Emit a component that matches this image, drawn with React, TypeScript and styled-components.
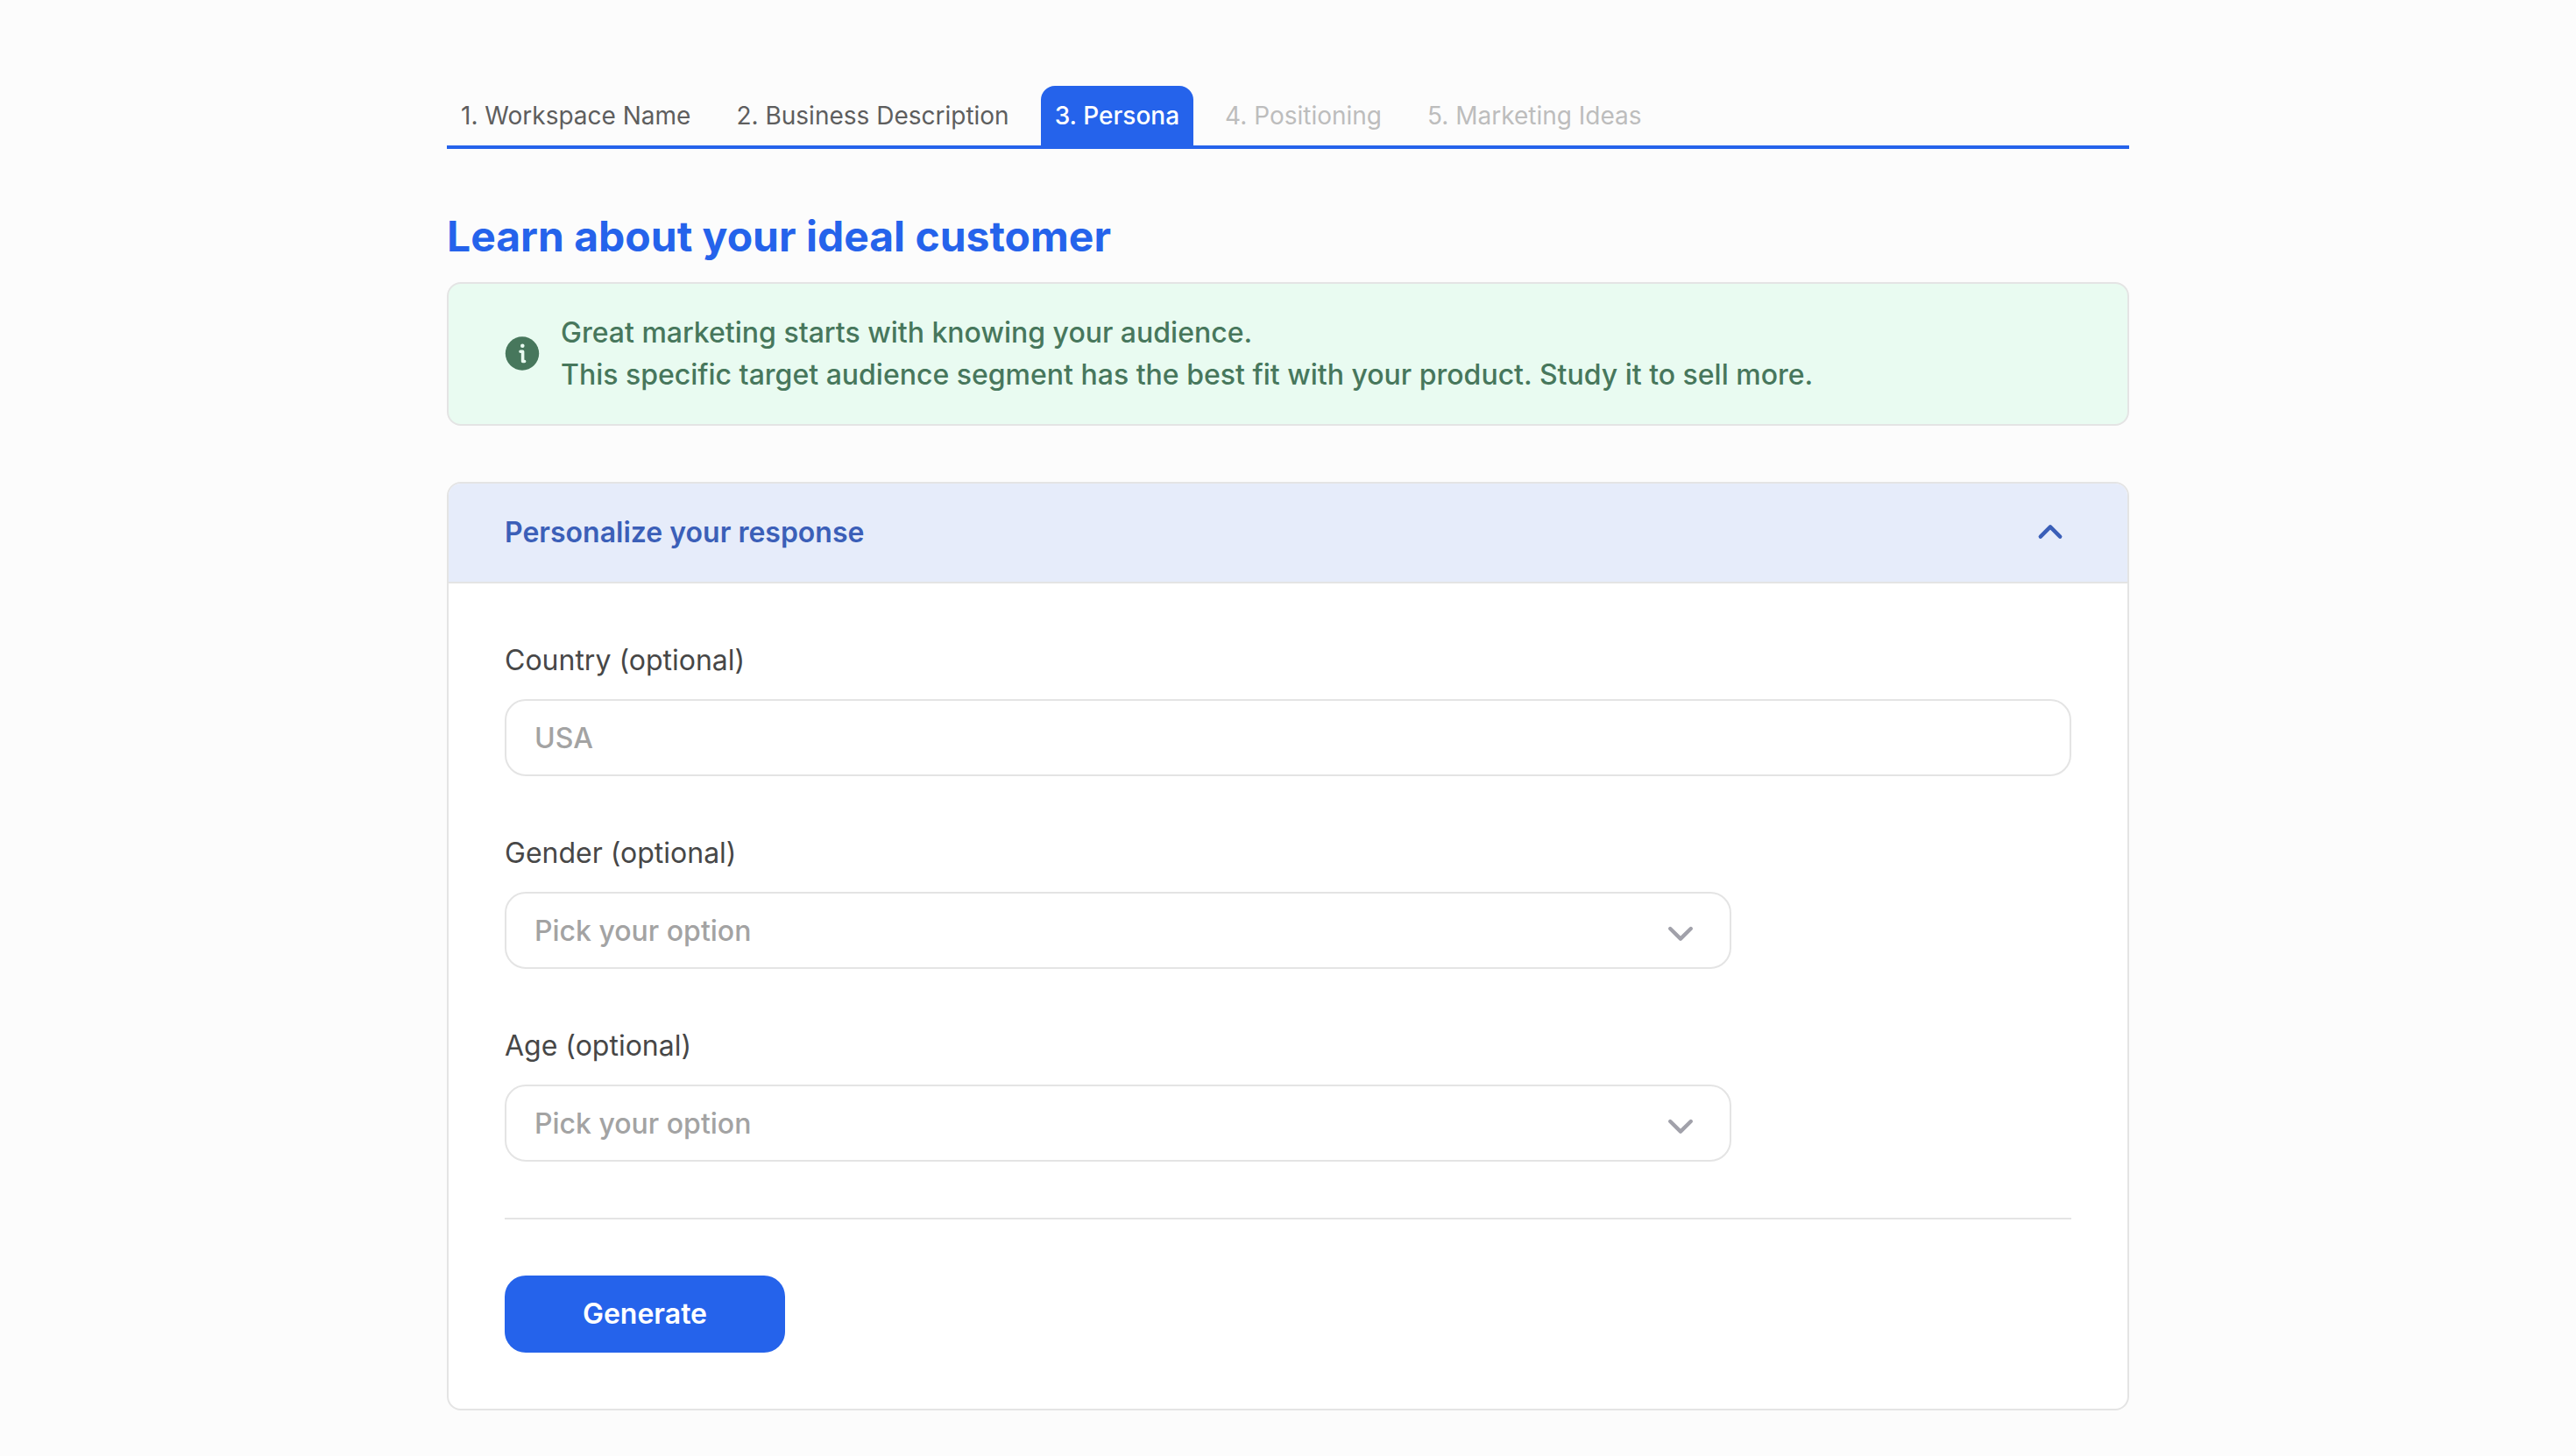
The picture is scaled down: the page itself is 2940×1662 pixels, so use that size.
import React, { useState } from "react";
import styled, { createGlobalStyle, css } from "styled-components";

const GlobalStyle = createGlobalStyle`
  *, *::before, *::after { box-sizing: border-box; }
  body {
    margin: 0;
    background: #fcfcfc;
    font-family: Inter, "Liberation Sans", sans-serif;
    font-size: 32px;
    line-height: 48px;
    -webkit-font-smoothing: antialiased;
  }
  button, input, select { font: inherit; }
`;

const Page = styled.main`
  width: 100%;
  max-width: 1984px;
  margin: 0 auto;
  padding: 98px 32px 52px;
`;

const Tabs = styled.nav`
  display: flex;
  gap: 20px;
  border-bottom: 4px solid #2563eb;
`;

const Tab = styled.button<{ $active?: boolean }>`
  padding: 14px 16px;
  border: 0;
  border-radius: 16px 16px 0 0;
  background: transparent;
  color: #5e5e5e;
  font-size: 28px;
  line-height: 40px;
  cursor: pointer;

  &:disabled {
    color: #bdbdbd;
    cursor: default;
  }

  ${({ $active }) =>
    $active &&
    css`
      background: #2563eb;
      color: #ffffff;
      font-weight: 500;
    `}
`;

const Title = styled.h1`
  margin: 64px 0 16px;
  color: #2563eb;
  font-size: 48px;
  font-weight: 700;
  line-height: 72px;
`;

const Notice = styled.section`
  display: flex;
  align-items: center;
  gap: 24px;
  padding: 32px 64px;
  border: 2px solid #e4e4e4;
  border-radius: 16px;
  background: #e9fbf1;
  color: #47775c;
  font-weight: 500;
`;

const NoticeText = styled.p`
  margin: 0;
`;

const InfoGlyph = styled.svg`
  flex: none;
  width: 40px;
  height: 40px;
`;

const Card = styled.section`
  margin-top: 64px;
  border: 2px solid #e4e4e4;
  border-radius: 16px;
  background: #ffffff;
  overflow: hidden;
`;

const CardHeader = styled.button`
  display: flex;
  align-items: center;
  justify-content: space-between;
  width: 100%;
  padding: 32px 72px 32px 64px;
  border: 0;
  border-bottom: 2px solid #e4e4e4;
  background: #e6ecfa;
  color: #3b5fb8;
  font-weight: 600;
  text-align: left;
  cursor: pointer;
`;

const Chevron = styled.svg`
  width: 32px;
  height: 32px;
  fill: none;
  stroke: currentColor;
  stroke-linecap: round;
  stroke-linejoin: round;
`;

const Form = styled.form`
  display: flex;
  flex-direction: column;
  gap: 64px;
  padding: 64px;
`;

const Field = styled.div<{ $narrow?: boolean }>`
  display: flex;
  flex-direction: column;
  gap: 20px;
  width: 100%;
  max-width: ${({ $narrow }) => ($narrow ? "1400px" : "none")};
`;

const Label = styled.label`
  color: #474747;
`;

const control = css`
  width: 100%;
  height: 88px;
  padding: 0 32px;
  border: 2px solid #e4e4e4;
  border-radius: 24px;
  background: #ffffff;
  color: #a3a3a3;
  font-weight: 500;
`;

const TextInput = styled.input`
  ${control}
  &::placeholder {
    color: #a3a3a3;
    opacity: 1;
  }
`;

const SelectWrap = styled.div`
  display: grid;
  align-items: center;
  color: #a1a1aa;

  > * {
    grid-area: 1 / 1;
  }
  > svg {
    justify-self: end;
    margin-right: 42px;
    pointer-events: none;
  }
`;

const Select = styled.select`
  ${control}
  padding-top: 2px;
  appearance: none;
`;

const Divider = styled.hr`
  width: 100%;
  height: 2px;
  margin: 0;
  border: 0;
  background: #e4e4e4;
`;

const Submit = styled.button`
  align-self: flex-start;
  width: 320px;
  height: 88px;
  border: 0;
  border-radius: 24px;
  background: #2563eb;
  color: #ffffff;
  font-weight: 600;
  cursor: pointer;
`;

const InfoIcon = () => (
  <InfoGlyph viewBox="0 0 40 40" aria-hidden="true">
    <circle cx="20" cy="19.5" r="19.2" fill="currentColor" />
    <circle cx="20.3" cy="10.8" r="2.3" fill="#e9fbf1" />
    <path
      d="M18 17.2h2.6v11.3h2"
      fill="none"
      stroke="#e9fbf1"
      strokeWidth="3.6"
      strokeLinecap="round"
      strokeLinejoin="round"
    />
  </InfoGlyph>
);

const tabs = [
  { label: "1. Workspace Name" },
  { label: "2. Business Description" },
  { label: "3. Persona", active: true },
  { label: "4. Positioning", locked: true },
  { label: "5. Marketing Ideas", locked: true },
];

const selects = [
  { id: "gender", label: "Gender (optional)", options: ["Female", "Male", "Any"] },
  { id: "age", label: "Age (optional)", options: ["18-24", "25-34", "35-44", "45+"] },
];

export default function App() {
  const [open, setOpen] = useState(true);

  return (
    <>
      <GlobalStyle />
      <Page>
        <Tabs aria-label="Setup steps">
          {tabs.map((tab) => (
            <Tab
              key={tab.label}
              type="button"
              $active={tab.active}
              disabled={tab.locked}
              aria-current={tab.active ? "step" : undefined}
            >
              {tab.label}
            </Tab>
          ))}
        </Tabs>

        <Title>Learn about your ideal customer</Title>

        <Notice>
          <InfoIcon />
          <NoticeText>
            Great marketing starts with knowing your audience.
            <br />
            This specific target audience segment has the best fit with your product. Study it to
            sell more.
          </NoticeText>
        </Notice>

        <Card>
          <CardHeader type="button" aria-expanded={open} onClick={() => setOpen(!open)}>
            Personalize your response
            <Chevron viewBox="0 0 32 32" strokeWidth="4.4" aria-hidden="true">
              <path d={open ? "M4.8 20.6 16 9.4 27.2 20.6" : "M4.8 9.4 16 20.6 27.2 9.4"} />
            </Chevron>
          </CardHeader>
          {open && (
            <Form onSubmit={(event) => event.preventDefault()}>
              <Field>
                <Label htmlFor="country">Country (optional)</Label>
                <TextInput id="country" type="text" placeholder="USA" />
              </Field>
              {selects.map((field) => (
                <Field key={field.id} $narrow>
                  <Label htmlFor={field.id}>{field.label}</Label>
                  <SelectWrap>
                    <Select id={field.id} defaultValue="">
                      <option value="" disabled>
                        Pick your option
                      </option>
                      {field.options.map((option) => (
                        <option key={option}>{option}</option>
                      ))}
                    </Select>
                    <Chevron viewBox="0 0 32 32" strokeWidth="4.4" aria-hidden="true">
                      <path d="M4.2 14 16 25.6 27.8 14" />
                    </Chevron>
                  </SelectWrap>
                </Field>
              ))}
              <Divider />
              <Submit type="submit">Generate</Submit>
            </Form>
          )}
        </Card>
      </Page>
    </>
  );
}
